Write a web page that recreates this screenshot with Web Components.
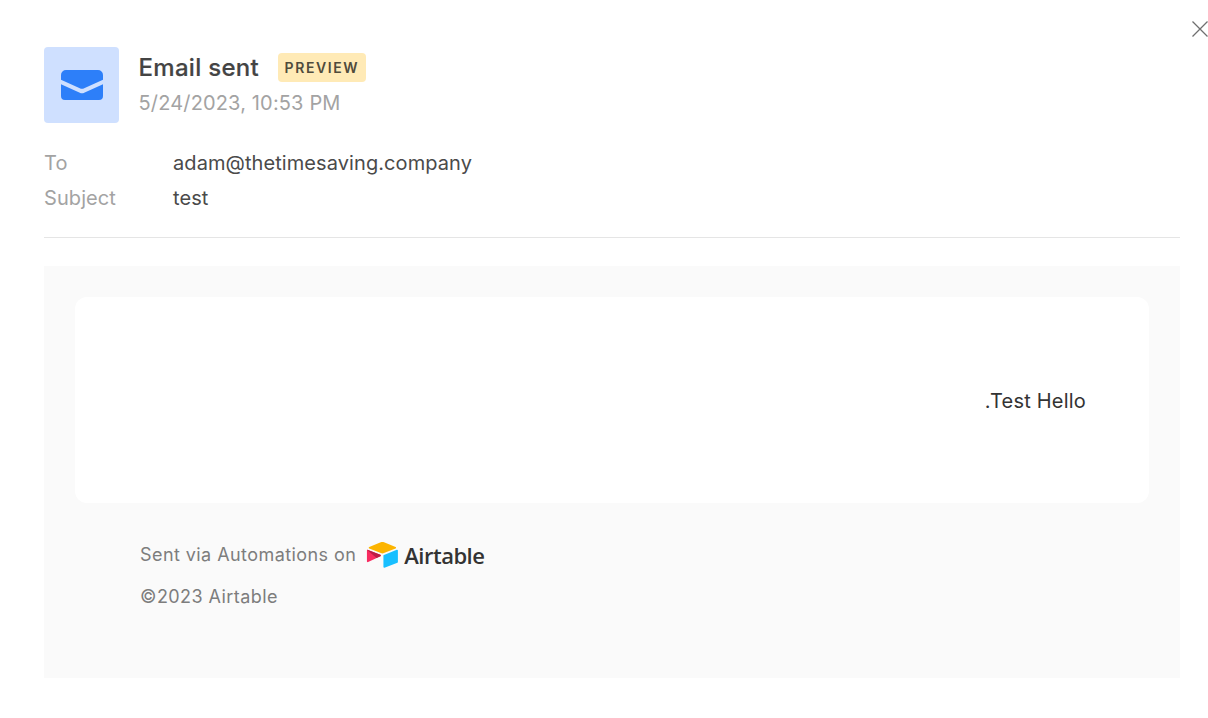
<!DOCTYPE html>
<html><head><meta charset="utf-8"><style>
html,body{margin:0;padding:0;background:#fff;width:1208px;height:718px;overflow:hidden}
body{font-family:Inter,"Liberation Sans",sans-serif}
</style></head><body>
<email-modal>
<email-header slot="header" title-text="Email sent" date="5/24/2023, 10:53 PM"></email-header>
<meta-row label="To" style="margin-top:23px">adam@thetimesaving.company</meta-row>
<meta-row label="Subject">test</meta-row>
<email-preview>
<span>.Test Hello</span>
</email-preview>
</email-modal>
<script>
function def(name, html, init){
  customElements.define(name, class extends HTMLElement{
    constructor(){super();const r=this.attachShadow({mode:'open'});r.innerHTML=html;}
    connectedCallback(){ if(init) init(this,this.shadowRoot); }
  });
}
def('close-button',`<style>:host{display:block;position:absolute;top:20px;right:-1px;width:18px;height:18px}svg{display:block}</style>
<svg width="18" height="18" viewBox="0 0 18 18"><path d="M1.5 1.5L16.5 16.5M16.5 1.5L1.500 16.500" stroke="#6f6f6f" stroke-width="1.3" fill="none"/></svg>`);
def('email-modal',`<style>:host{display:block;position:relative;box-sizing:border-box;width:1208px;height:718px;padding:47px 28px 0 44px}</style>
<close-button></close-button><slot name="header"></slot><slot></slot>`);
def('email-header',`<style>:host{display:flex;gap:19.5px;height:76px}
.tile{width:75px;height:76px;border-radius:4px;background:#cfe0ff;display:flex;align-items:center;justify-content:center}
.t{display:flex;flex-direction:column}
.top{display:flex;align-items:center;gap:18.5px;height:41px}
h1{margin:0;font:500 24px/29px Inter,sans-serif;letter-spacing:.3px;color:#444;-webkit-text-stroke:.2px #444}
.b{font:600 14px/29px Inter,sans-serif;letter-spacing:1.6px;color:#4f4b3c;background:#ffeab6;border-radius:4px;height:29px;padding:0 7px;box-sizing:border-box;margin-top:-1px}
.d{font:400 20px/24px Inter,sans-serif;letter-spacing:.15px;color:#a3a3a3;margin-top:3px}
svg{display:block}</style>
<div class="tile"><svg width="42" height="30" viewBox="0 0 42 30"><path fill="#2d7ff9" d="M5 0H37A5 5 0 0 1 42 5V9.800L23.200 18.300Q21 19.300 18.800 18.300L0 9.800V5A5 5 0 0 1 5 0Z"/><path fill="#2d7ff9" d="M0 14.300L18.800 22.800Q21 23.800 23.200 22.800L42 14.300V26A4 4 0 0 1 38 30H4A4 4 0 0 1 0 26Z"/></svg></div>
<div class="t"><div class="top"><h1 id="h"></h1><span class="b">PREVIEW</span></div><div class="d" id="d"></div></div>`,
(e,r)=>{r.getElementById('h').textContent=e.getAttribute('title-text');r.getElementById('d').textContent=e.getAttribute('date');});
def('meta-row',`<style>:host{display:flex;height:35px;align-items:center;font:400 20px/35px Inter,sans-serif;letter-spacing:.08px}
.l{width:129px;color:#a3a3a3}.v{color:#4a4a4a}</style><div class="l" id="l"></div><div class="v"><slot></slot></div>`,
(e,r)=>{r.getElementById('l').textContent=e.getAttribute('label');});
def('email-preview',`<style>:host{display:block}
.rule{height:1px;background:#e5e5e5;margin:21px 0 28px}
.panel{background:#fafafa;height:412px;box-sizing:border-box;padding:31px}
.card{height:206px;background:#fff;border-radius:12px;box-sizing:border-box;padding:2px 63px 0;display:flex;align-items:center;justify-content:flex-end;font:400 20px/24px Inter,sans-serif;letter-spacing:.2px;color:#333}</style>
<div class="rule"></div><div class="panel"><div class="card"><slot></slot></div><air-footer></air-footer></div>`);
def('air-footer',`<style>:host{display:block;padding:34px 0 0 65px;font:400 18px/26px Inter,sans-serif;letter-spacing:.43px;color:#7d7d7d}
.row{display:flex;align-items:center;height:36px}
.row2{margin-top:11px;height:26px;line-height:26px}
svg{display:block;margin-left:9px}
.w{font:600 22px/30px "Open Sans",Inter,sans-serif;color:#333;letter-spacing:-.5px;margin-left:4px}</style>
<div class="row"><span>Sent via Automations on</span><svg width="35" height="30" viewBox="0 0 200 170"><path fill="#FCB400" d="M90.04 12.37L24.08 39.66C20.41 41.18 20.45 46.39 24.14 47.85L90.38 74.12C96.2 76.43 102.68 76.43 108.5 74.12L174.73 47.85C178.42 46.39 178.46 41.18 174.79 39.66L108.83 12.37C102.82 9.88 96.06 9.88 90.04 12.37"/><path fill="#18BFFF" d="M105.31 88.46V154.08C105.31 157.2 108.46 159.33 111.36 158.18L185.17 129.54C186.85 128.87 187.96 127.24 187.96 125.43V59.81C187.96 56.69 184.81 54.55 181.91 55.7L108.1 84.35C106.42 85.02 105.31 86.65 105.31 88.46"/><path fill="#F82B60" d="M88.08 91.85L66.17 102.42 63.95 103.5 17.71 125.65C14.78 127.07 11.04 124.93 11.04 121.67V60.09C11.04 58.91 11.64 57.89 12.45 57.13 12.79 56.79 13.18 56.51 13.57 56.29 14.68 55.63 16.25 55.45 17.59 55.98L87.71 83.76C91.27 85.17 91.55 90.17 88.08 91.85"/><path fill="#BA1E45" d="M88.08 91.85L66.17 102.42 12.45 57.13C12.79 56.79 13.18 56.51 13.57 56.29 14.68 55.63 16.25 55.45 17.59 55.98L87.71 83.76C91.27 85.17 91.55 90.17 88.08 91.85"/></svg><span class="w">Airtable</span></div>
<div class="row2">©2023 Airtable</div>`);
</script>
</body></html>
